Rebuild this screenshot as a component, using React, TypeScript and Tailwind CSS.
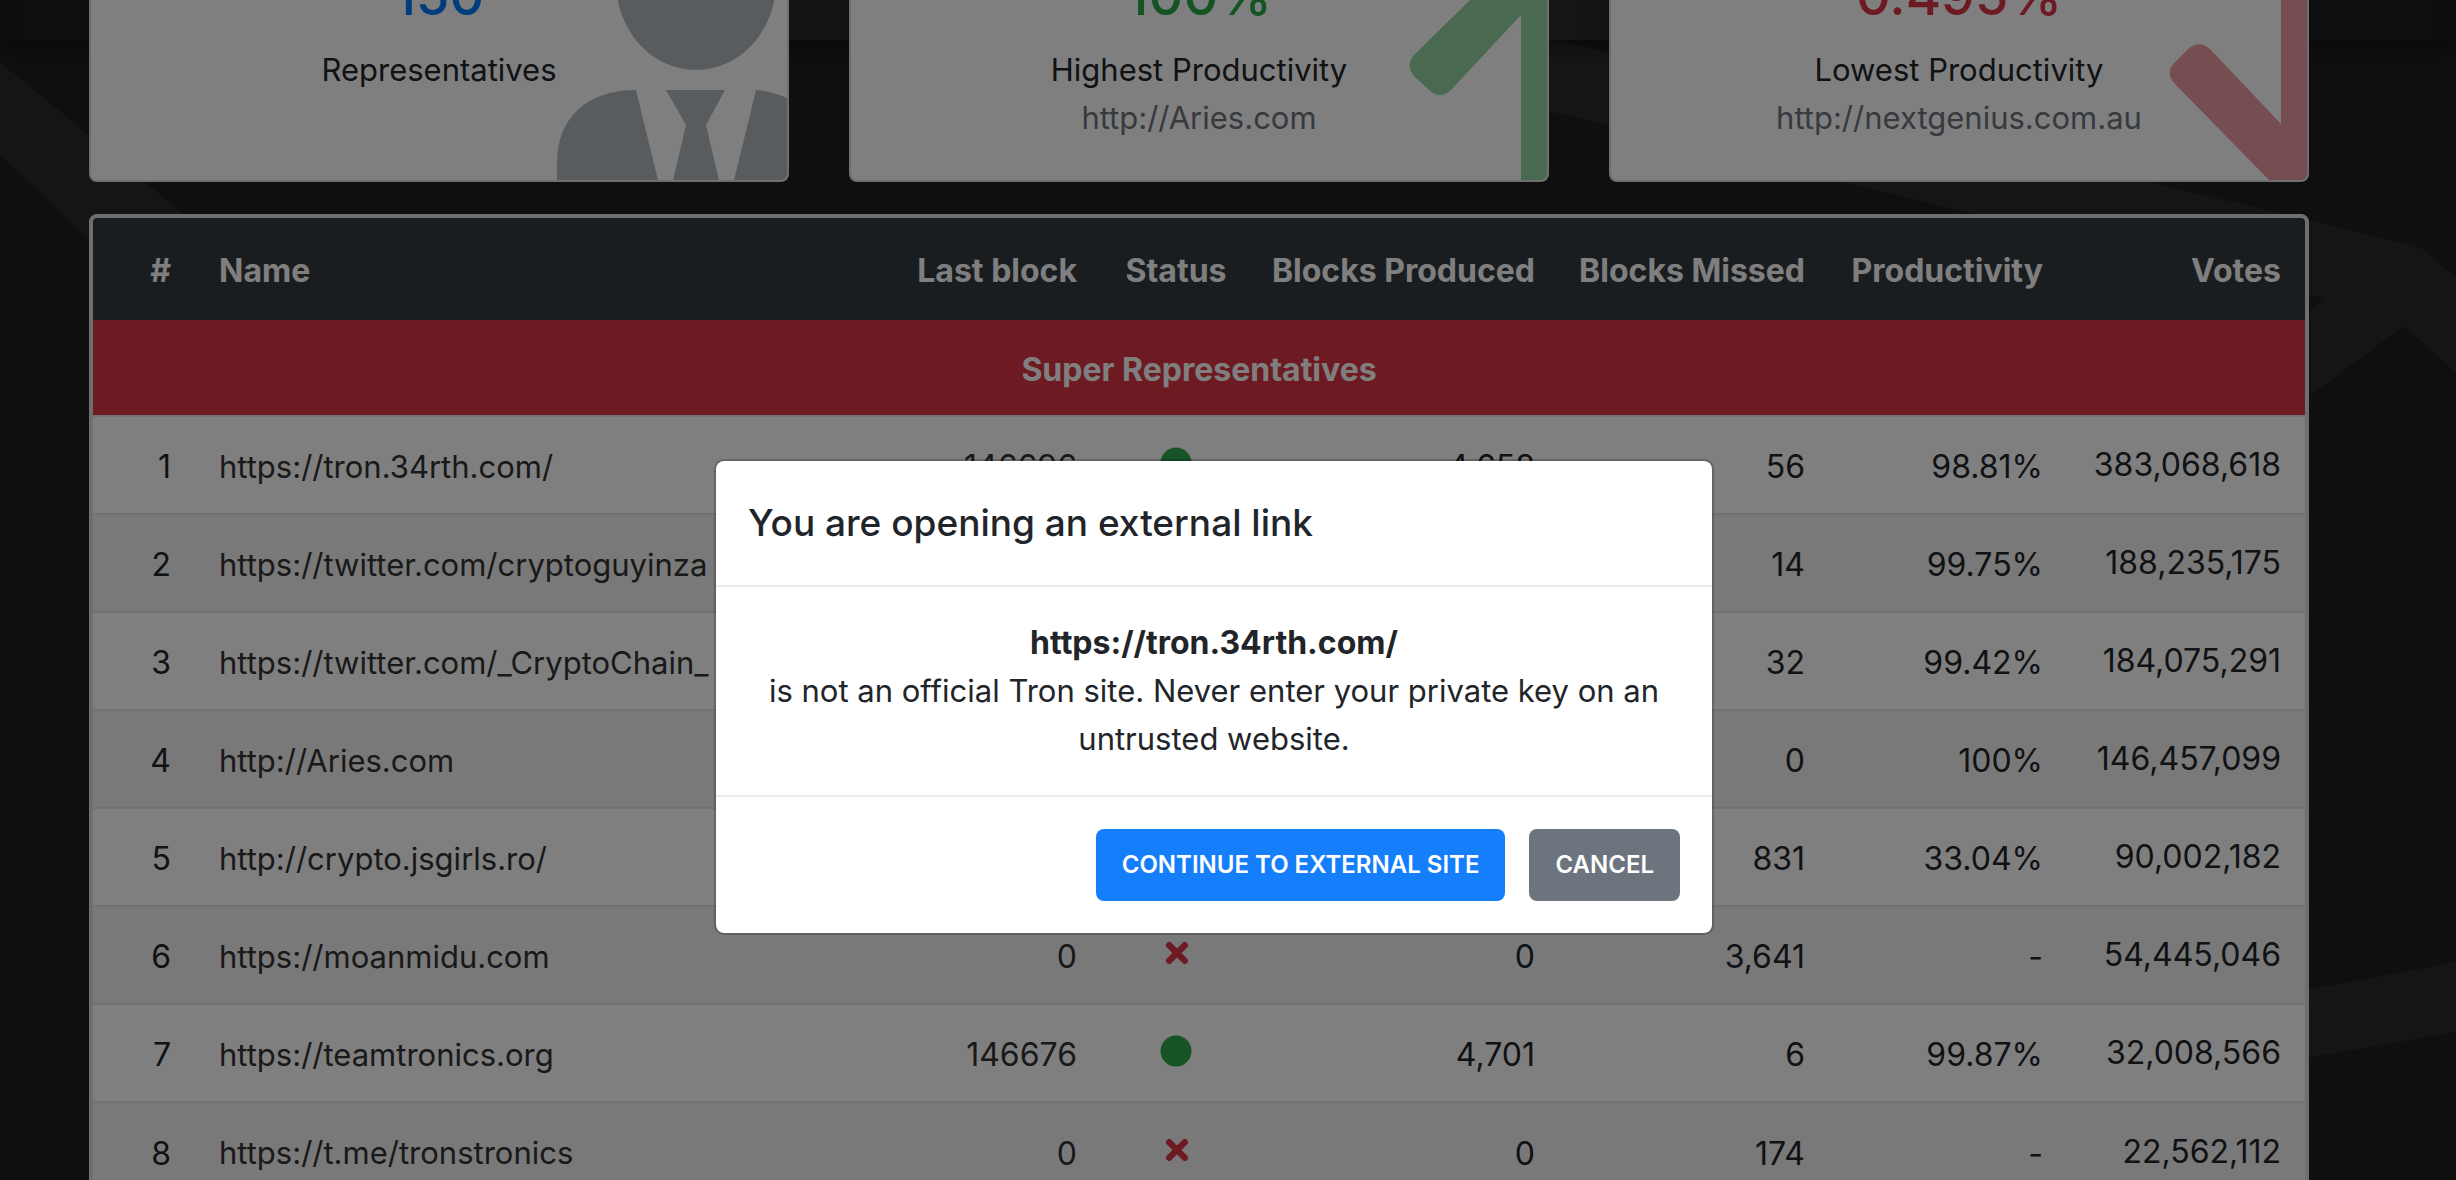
import React from "react";

type Rep = {
  name: string;
  last: string;
  up: boolean;
  produced: string;
  missed: string;
  productivity: string;
  votes: string;
};

const reps: Rep[] = [
  { name: "https://tron.34rth.com/", last: "146696", up: true, produced: "4,658", missed: "56", productivity: "98.81%", votes: "383,068,618" },
  { name: "https://twitter.com/cryptoguyinza", last: "146690", up: true, produced: "5,640", missed: "14", productivity: "99.75%", votes: "188,235,175" },
  { name: "https://twitter.com/_CryptoChain_", last: "146688", up: true, produced: "5,488", missed: "32", productivity: "99.42%", votes: "184,075,291" },
  { name: "http://Aries.com", last: "146685", up: true, produced: "1,210", missed: "0", productivity: "100%", votes: "146,457,099" },
  { name: "http://crypto.jsgirls.ro/", last: "146680", up: true, produced: "410", missed: "831", productivity: "33.04%", votes: "90,002,182" },
  { name: "https://moanmidu.com", last: "0", up: false, produced: "0", missed: "3,641", productivity: "-", votes: "54,445,046" },
  { name: "https://teamtronics.org", last: "146676", up: true, produced: "4,701", missed: "6", productivity: "99.87%", votes: "32,008,566" },
  { name: "https://t.me/tronstronics", last: "0", up: false, produced: "0", missed: "174", productivity: "-", votes: "22,562,112" },
];

function Backdrop() {
  return (
    <svg
      aria-hidden="true"
      className="absolute inset-0 h-full w-full"
      viewBox="0 0 2456 1180"
      preserveAspectRatio="none"
    >
      <g fill="#2b2b2b">
        <path d="M0 62 L183 214 L183 330 L0 154 Z" />
        <path d="M1540 36 L2420 247 L2456 278 L2456 372 L2404 326 L2311 395 L2311 310 L2324 298 L1540 109 Z" />
        <path d="M2200 1010 L2456 962 L2456 1032 L2200 1076 Z" />
      </g>
    </svg>
  );
}

function Person() {
  return (
    <svg aria-hidden="true" className="absolute right-0 bottom-0 h-[180px] w-[230px]" viewBox="0 0 230 180" fill="#b2b9bf">
      <ellipse cx="139" cy="-18" rx="80" ry="88" />
      <path d="M0 180 V162 C0 118 30 90 79 90 L101 180 Z" />
      <path d="M109 90 H168 L149 125 L162 180 H116 L129 125 Z" />
      <path d="M199 90 C212 91 222 94 230 98 V180 H177 Z" />
    </svg>
  );
}

function ArrowUp() {
  return (
    <svg aria-hidden="true" className="absolute right-0 bottom-0 h-[180px] w-[140px]" viewBox="0 0 140 180" fill="#94d3a2">
      <path d="M63 0 H140 V180 H114 V15 L44 90 Q33 100 22 90 L7 76 Q-2 66 7 55 Z" />
    </svg>
  );
}

function ArrowDown() {
  return (
    <svg aria-hidden="true" className="absolute right-0 bottom-0 h-[180px] w-[140px]" viewBox="0 0 140 180" fill="#ed9aa2">
      <path d="M114 0 H140 V180 H102 L8 84 Q-2 73 7 63 L21 49 Q32 39 44 50 L114 124 Z" />
    </svg>
  );
}

function StatCard(props: { value: string; color: string; label: string; link?: string; art: React.ReactNode }) {
  return (
    <section className="relative -mt-[60px] h-[242px] overflow-hidden rounded-b-lg border-2 border-[#dfdfdf] bg-white text-center">
      {props.art}
      <div className="relative pt-5 text-[31px]">
        <p className={"text-[54px] leading-[68px] font-medium " + props.color}>{props.value}</p>
        <p className="mt-4 leading-[48px]">{props.label}</p>
        {props.link && (
          <a href={props.link} className="block leading-[48px] text-[#6c757d]">
            {props.link}
          </a>
        )}
      </div>
    </section>
  );
}

function Status({ up }: { up: boolean }) {
  return up ? (
    <svg role="img" aria-label="Producing" className="mx-auto h-8 w-8 overflow-visible" viewBox="0 0 32 32">
      <circle cx="16" cy="14" r="15.5" fill="#2fa84a" />
    </svg>
  ) : (
    <svg role="img" aria-label="Not producing" className="mx-auto h-8 w-8" viewBox="0 0 32 32">
      <path d="M9.2 6.2 L24.8 21.8 M24.8 6.2 L9.2 21.8" stroke="#dc3545" strokeWidth="6.4" strokeLinecap="round" />
    </svg>
  );
}

export default function App() {
  return (
    <div className="relative h-screen overflow-hidden bg-[#1f1f1f] font-['Inter',sans-serif] text-[32px] text-[#212529]">
      <Backdrop />
      <header className="absolute inset-x-0 top-0 h-10 bg-linear-to-r from-[#191d20] via-[#2d2f33] to-[#191d20] shadow-[0_4px_24px_#00000080]" />

      <main className="relative mr-[58px] px-[89px]">
        <div className="grid grid-cols-3 gap-[60px]">
          <StatCard value="150" color="text-[#007bff]" label="Representatives" art={<Person />} />
          <StatCard value="100%" color="text-[#28a745]" label="Highest Productivity" link="http://Aries.com" art={<ArrowUp />} />
          <StatCard value="0.495%" color="text-[#dc3545]" label="Lowest Productivity" link="http://nextgenius.com.au" art={<ArrowDown />} />
        </div>

        <div className="mt-8 overflow-hidden rounded-t-lg border-4 border-[#dfdfdf] bg-white">
          <table className="w-full border-collapse text-right whitespace-nowrap">
            <thead>
              <tr className="h-[102px] bg-[#343a40] text-white">
                <th className="w-[102px] min-w-[102px] pt-1 pr-6">#</th>
                <th className="px-6 pt-1 text-left">Name</th>
                <th className="w-[207px] pt-1 pr-6">Last block</th>
                <th className="w-[150px] pt-1 text-center">Status</th>
                <th className="w-[308px] pt-1 pr-6">Blocks Produced</th>
                <th className="w-[270px] pt-1 pr-6">Blocks Missed</th>
                <th className="w-[238px] pt-1 pr-6">Productivity</th>
                <th className="w-[238px] pt-1 pr-6">Votes</th>
              </tr>
            </thead>
            <tbody>
              <tr className="h-[96px] bg-[#dc3545] text-white">
                <th colSpan={8} className="pt-1 text-center">Super Representatives</th>
              </tr>
              {reps.map((r, i) => (
                <tr key={r.name} className="h-[98px] border-t-2 border-[#dee2e6] odd:bg-[#f2f2f2]">
                  <td className="pt-1 pr-6">{i + 1}</td>
                  <td className="px-6 pt-1 text-left text-[31px] text-[#333]">
                    <a href={r.name}>{r.name}</a>
                  </td>
                  <td className="pt-1 pr-6 text-[#333]">{r.last}</td>
                  <td><Status up={r.up} /></td>
                  <td className="pt-1 pr-6">{r.produced}</td>
                  <td className="pt-1 pr-6">{r.missed}</td>
                  <td className="pt-1 pr-6">{r.productivity}</td>
                  <td className="pr-6">{r.votes}</td>
                </tr>
              ))}
            </tbody>
          </table>
        </div>
      </main>

      <div className="absolute inset-0 bg-black/50" />

      <div className="absolute inset-0 flex items-start justify-center pt-[459px] pr-7">
        <div
          role="dialog"
          aria-modal="true"
          aria-labelledby="dialog-title"
          className="w-[1000px] rounded-[10px] border-2 border-black/20 bg-white bg-clip-padding"
        >
          <div className="border-b-2 border-[#e9ecef] px-8 py-8">
            <h5 id="dialog-title" className="text-[37px] leading-[60px] font-medium">You are opening an external link</h5>
          </div>
          <div className="px-8 py-8 text-center leading-[48px]">
            <p className="font-bold">https://tron.34rth.com/</p>
            <p className="text-[31px]">is not an official Tron site. Never enter your private key on an untrusted website.</p>
          </div>
          <div className="flex justify-end gap-6 border-t-2 border-[#e9ecef] px-8 py-8 text-[24px] font-semibold text-white">
            <button type="button" className="h-[72px] rounded-lg bg-[#157efb] px-[26px]">CONTINUE TO EXTERNAL SITE</button>
            <button type="button" className="h-[72px] rounded-lg bg-[#6c757d] px-[26px]">CANCEL</button>
          </div>
        </div>
      </div>
    </div>
  );
}
